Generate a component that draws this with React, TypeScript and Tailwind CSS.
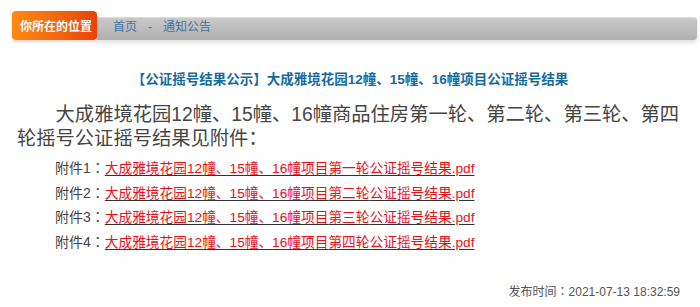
import React from "react";

const files = ["第一轮", "第二轮", "第三轮", "第四轮"];

// full-width colon drawn centred, like the original page's font
const Colon = () => (
  <span style={{ fontFamily: '"Noto Sans CJK JP", sans-serif' }}>：</span>
);

const App = () => {
  return (
    <div
      className="w-[700px] h-[307px] bg-white overflow-hidden"
      style={{ fontFamily: '"Liberation Sans", "Noto Sans CJK SC", sans-serif' }}
    >
      {/* breadcrumb bar */}
      <div className="flex items-end pl-[12px] pr-[3px] pt-[11px]">
        <div className="w-[85px] h-[29px] rounded-[4px] bg-gradient-to-r from-[#ff8a12] to-[#e8420a] flex items-center pl-[8px] pt-[3px] text-white text-[12px] font-bold shadow-[0_2px_3px_rgba(0,0,0,0.15)] z-10">
          你所在的位置
        </div>
        <div className="flex-1 h-[23px] rounded-r-[3px] bg-gradient-to-b from-[#c9c9c9] to-[#b0b0b0] border-t border-[#dcdcdc] shadow-[0_3px_4px_rgba(0,0,0,0.12)] flex items-center pl-[16px] pb-[4px] text-[12px] text-[#3f72a8]">
          <span>首页</span>
          <span className="mx-[11px]">-</span>
          <span>通知公告</span>
        </div>
      </div>

      {/* title */}
      <h1 className="mt-[31px] text-center text-[13.5px] leading-[18px] font-bold text-[#176a9e]">
        【公证摇号结果公示】大成雅境花园12幢、15幢、16幢项目公证摇号结果
      </h1>

      {/* body */}
      <p className="mt-[14px] pl-[17px] pr-[10px] text-[19.3px] leading-[24px] indent-[2em] text-[#454545]">
        大成雅境花园12幢、15幢、16幢商品住房第一轮、第二轮、第三轮、第四轮摇号公证摇号结果见附件：
      </p>

      <ul className="mt-[5px] pl-[55px] flex flex-col">
        {files.map((f, i) => (
          <li key={f} className="text-[14px] leading-[22.5px] text-[#444]">
            附件{i + 1}
            <Colon />
            <a
              href="#"
              className="text-[13.7px] text-[#e8101a] underline decoration-[#333] underline-offset-[2px]"
            >
              大成雅境花园12幢、15幢、16幢项目{f}公证摇号结果.pdf
            </a>
          </li>
        ))}
      </ul>

      <div className="mt-[29px] pr-[20px] text-right text-[12px] leading-[16px] text-[#555]">
        发布时间
        <Colon />
        2021-07-13 18:32:59
      </div>
    </div>
  );
};

export default App;
